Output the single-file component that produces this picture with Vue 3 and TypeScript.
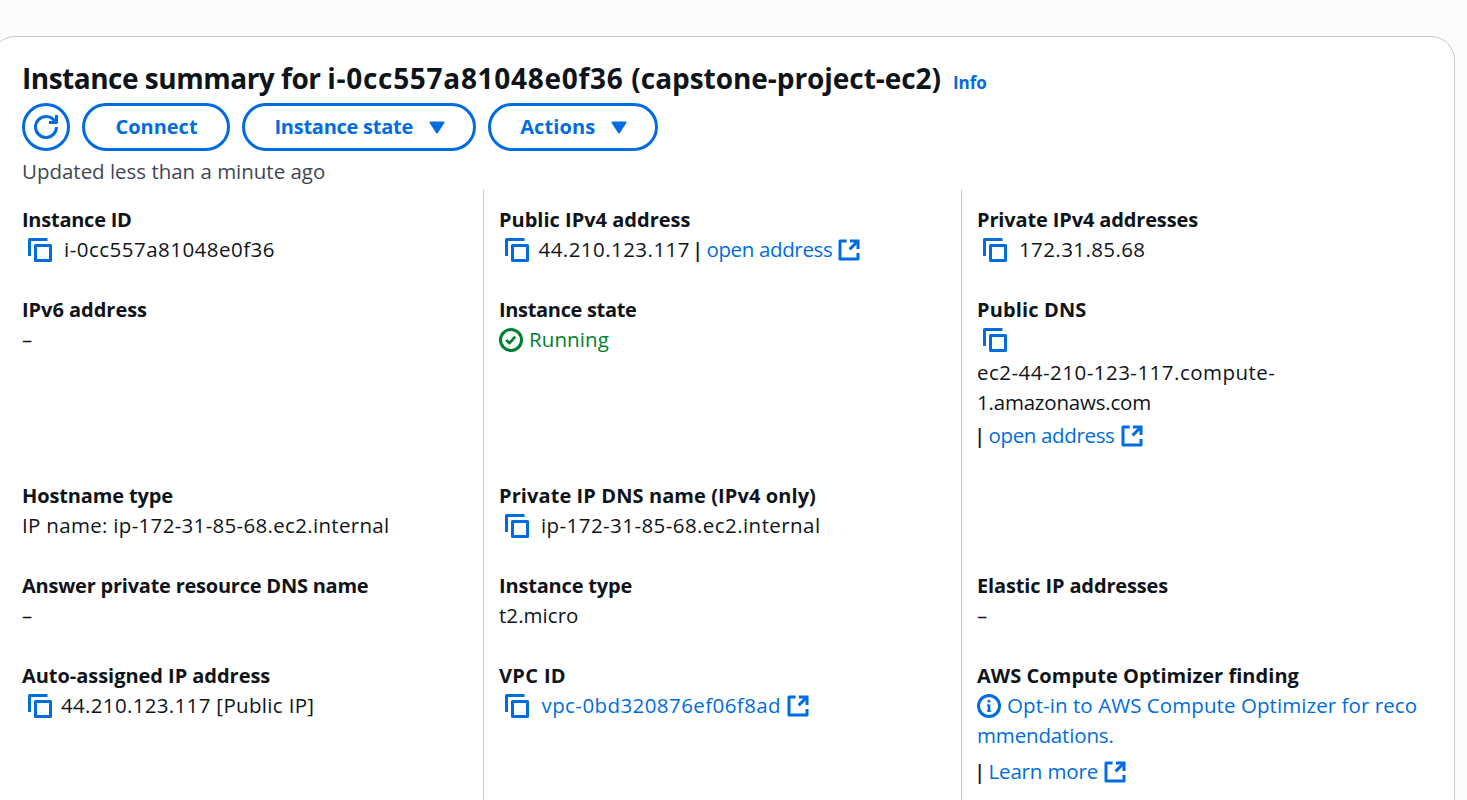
<script setup lang="ts">
type Part =
  | { kind: 'text' | 'link' | 'status'; text: string; track: number; before?: number }
  | { kind: 'copy' | 'external' | 'check' | 'info' | 'bar'; before?: number }

interface Line { top?: number; parts: Part[] }
interface Field { label: string; track: number; lines: Line[] }

const copy: Part = { kind: 'copy', before: 6 }
const bar: Part = { kind: 'bar' }
const text = (t: string, track: number, before = 0): Part => ({ kind: 'text', text: t, track, before })
const link = (t: string, track: number, before = 0): Part => ({ kind: 'link', text: t, track, before })
const external: Part = { kind: 'external', before: 5 }
const dash: Line[] = [{ parts: [text('–', 0)] }]

const rows: (Field | null)[][] = [
  [
    { label: 'Instance ID', track: -0.25, lines: [{ parts: [copy, text('i-0cc557a81048e0f36', 0.48, 12)] }] },
    {
      label: 'Public IPv4 address', track: 0,
      lines: [{ parts: [copy, text('44.210.123.117', 0.45, 9.5), { kind: 'bar', before: 5 }, link('open address', -0.35, 5.5), external] }],
    },
    { label: 'Private IPv4 addresses', track: -0.14, lines: [{ parts: [copy, text('172.31.85.68', 0.4, 12)] }] },
  ],
  [
    { label: 'IPv6 address', track: -0.03, lines: dash },
    {
      label: 'Instance state', track: -0.33,
      lines: [{ parts: [{ kind: 'check' }, { kind: 'status', text: 'Running', track: 0.1, before: 6 }] }],
    },
    {
      label: 'Public DNS', track: 0.14,
      lines: [
        { parts: [copy] },
        { top: 3, parts: [text('ec2-44-210-123-117.compute-', 0.48)] },
        { parts: [text('1.amazonaws.com', -0.2)] },
        { top: 3, parts: [bar, link('open address', -0.35, 5.5), external] },
      ],
    },
  ],
  [
    { label: 'Hostname type', track: -0.13, lines: [{ parts: [text('IP name: ip-172-31-85-68.ec2.internal', 0.31)] }] },
    {
      label: 'Private IP DNS name (IPv4 only)', track: 0.09,
      lines: [{ parts: [copy, text('ip-172-31-85-68.ec2.internal', 0.43, 12)] }],
    },
    null,
  ],
  [
    { label: 'Answer private resource DNS name', track: -0.23, lines: dash },
    { label: 'Instance type', track: -0.18, lines: [{ parts: [text('t2.micro', 0.05)] }] },
    { label: 'Elastic IP addresses', track: -0.14, lines: dash },
  ],
  [
    { label: 'Auto-assigned IP address', track: -0.04, lines: [{ parts: [copy, text('44.210.123.117 [Public IP]', 0.33, 9)] }] },
    { label: 'VPC ID', track: 0.35, lines: [{ parts: [copy, link('vpc-0bd320876ef06f8ad', 0.42, 12.5), external] }] },
    {
      label: 'AWS Compute Optimizer finding', track: 0.04,
      lines: [
        { parts: [{ kind: 'info' }, link('Opt-in to AWS Compute Optimizer for reco', 0.07, 6)] },
        { parts: [link('mmendations.', -0.15)] },
        { top: 6, parts: [bar, link('Learn more', -0.16, 5.5), external] },
      ],
    },
  ],
]
</script>

<template>
  <main class="page">
    <section class="card">
      <header class="head">
        <div class="title-row">
          <h1><span class="lead">Instance summary for </span><span class="ident">i-0cc557a81048e0f36 </span><span class="name">(capstone-project-ec2)</span></h1>
          <a class="info-link">Info</a>
        </div>
        <div class="buttons">
          <button class="btn round" aria-label="Refresh">
            <svg width="24" height="24" viewBox="0 0 16 16" class="icon">
              <path d="M15 8c0 3.87-3.13 7-7 7s-7-3.13-7-7 3.13-7 7-7c2.79 0 5.2 1.63 6.33 4" />
              <path d="M10 5h5V0" />
            </svg>
          </button>
          <button class="btn connect">Connect</button>
          <button class="btn state">
            <span>Instance state</span>
            <svg width="16" height="13" viewBox="0 0 16 13" class="caret"><path d="M1.5 1.5h13L8 11.5z" /></svg>
          </button>
          <button class="btn actions">
            <span>Actions</span>
            <svg width="16" height="13" viewBox="0 0 16 13" class="caret"><path d="M1.5 1.5h13L8 11.5z" /></svg>
          </button>
        </div>
        <p class="updated">Updated less than a minute ago</p>
      </header>

      <div class="details">
        <template v-for="(row, r) in rows" :key="r">
          <div v-for="(field, c) in row" :key="c" class="cell">
            <template v-if="field">
              <div class="label" :style="{ letterSpacing: field.track + 'px' }">{{ field.label }}</div>
              <div v-for="(line, l) in field.lines" :key="l" class="line" :style="{ marginTop: (line.top ?? 0) + 'px' }">
                <template v-for="(part, p) in line.parts" :key="p">
                  <svg v-if="part.kind === 'copy'" class="icon" width="24" height="24" viewBox="0 0 24 24" :style="{ marginLeft: part.before + 'px' }">
                    <path class="thick" d="M1.5 18V1.5H19.5" />
                    <path class="thick" d="M7.5 7.5h15v15h-15z" />
                  </svg>
                  <svg v-else-if="part.kind === 'external'" class="icon" width="24" height="24" viewBox="0 0 16 16" :style="{ marginLeft: part.before + 'px' }">
                    <path class="miter" d="M8.6 2H14v5.4" />
                    <path d="m8.4 7.6 5.6-5.6" />
                    <path d="M14 10v4H2V2h4.4" />
                  </svg>
                  <svg v-else-if="part.kind === 'check'" class="icon green" width="24" height="24" viewBox="0 0 16 16">
                    <circle cx="8" cy="8" r="7" />
                    <path class="tick" d="m4.8 8 2.2 2.1 3.8-4.4" />
                  </svg>
                  <svg v-else-if="part.kind === 'info'" class="icon" width="24" height="24" viewBox="0 0 16 16">
                    <circle cx="8" cy="8" r="7" />
                    <path class="stem" d="M8 4v1.6M8 7v4.8" />
                    <path class="serif" d="M6.6 7.4H8M6.6 11.4h2.9" />
                  </svg>
                  <i v-else-if="part.kind === 'bar'" class="bar" :style="{ marginLeft: (part.before ?? 0) + 'px' }">|</i>
                  <span v-else :class="part.kind" :style="{ letterSpacing: part.track + 'px', marginLeft: part.before + 'px' }">{{ part.text }}</span>
                </template>
              </div>
            </template>
          </div>
        </template>
      </div>
    </section>
  </main>
</template>

<style>
body {
  margin: 0;
  overflow: hidden;
  background: #fcfcfd;
}
</style>

<style scoped>
.page {
  box-sizing: border-box;
  width: 1467px;
  height: 800px;
  overflow: hidden;
  padding-top: 36px;
  background: #fcfcfd;
  color: #0f141a;
  font: 400 20.5px/30px "Open Sans", "Noto Sans", sans-serif;
}
.card {
  box-sizing: border-box;
  width: 1464px;
  height: 840px;
  margin-left: -9px;
  padding: 23px 0 0 30px;
  border: 1px solid #c6c6cd;
  border-radius: 24px;
  background: #fff;
}
.head {
  height: 130px;
}
.title-row {
  display: flex;
  align-items: baseline;
  height: 43px;
  white-space: nowrap;
}
h1 {
  margin: 0;
  font-size: 28px;
  line-height: 36px;
  font-weight: 700;
  white-space: pre;
}
.lead { letter-spacing: -0.49px; }
.ident { letter-spacing: 0.7px; }
.name { letter-spacing: -0.05px; }
.info-link {
  margin-left: 12px;
  color: #006ce0;
  font-size: 17px;
  font-weight: 700;
  line-height: 24px;
}
.buttons {
  display: flex;
  gap: 12px;
}
.btn {
  box-sizing: border-box;
  display: flex;
  align-items: center;
  justify-content: center;
  height: 48px;
  padding: 0 0 0 1px;
  border: 3px solid #006ce0;
  border-radius: 24px;
  background: #fff;
  color: #006ce0;
  font: 700 20px/30px "Open Sans", "Noto Sans", sans-serif;
  white-space: nowrap;
}
.round { width: 48px; padding: 0; }
.connect { width: 148px; letter-spacing: 0; }
.state { width: 234px; letter-spacing: -0.25px; }
.actions { width: 170px; letter-spacing: 0.12px; }
.caret {
  margin-left: 15.5px;
  fill: #006ce0;
  stroke: #006ce0;
  stroke-width: 2;
  stroke-linejoin: round;
}
.updated {
  margin: 5px 0 0;
  color: #424650;
  letter-spacing: -0.02px;
}
.details {
  display: grid;
  grid-template-columns: 461px 478px 478px;
  height: 640px;
  align-content: start;
}
.cell {
  box-sizing: border-box;
  padding: 15px 0;
  white-space: nowrap;
}
.cell:nth-child(3n + 2),
.cell:nth-child(3n) {
  padding-left: 15px;
  border-left: 1px solid #c6c6cd;
}
.cell:nth-child(n + 13) {
  min-height: 200px;
}
.label {
  font-size: 20px;
  font-weight: 700;
}
.line {
  display: flex;
  align-items: center;
  height: 30px;
}
.line > span,
.bar {
  padding-bottom: 2px;
}
.link { color: #006ce0; }
.status { color: #00802f; }
.bar {
  width: 6px;
  font-style: normal;
  font-weight: 600;
  text-indent: -3px;
}
.icon {
  flex: none;
  fill: none;
  stroke: #006ce0;
  stroke-width: 2;
  stroke-linejoin: round;
}
.icon .miter { stroke-linejoin: miter; }
.icon .thick { stroke-width: 3; }
.icon .stem { stroke-width: 1.8; }
.icon .serif { stroke-width: 0.9; }
.icon .tick { stroke-width: 1.8; }
.green { stroke: #00802f; }
</style>
